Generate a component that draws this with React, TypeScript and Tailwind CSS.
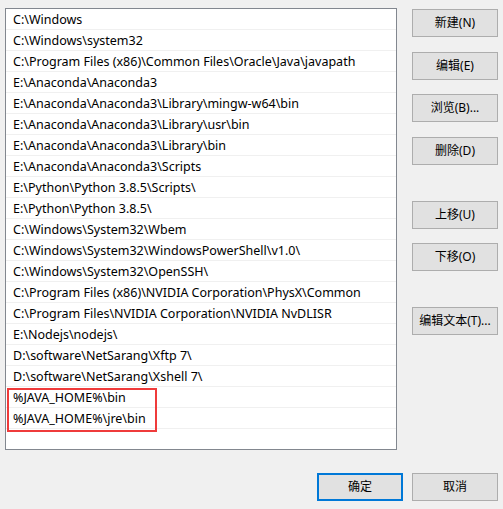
const paths = [
  'C:\\Windows',
  'C:\\Windows\\system32',
  'C:\\Program Files (x86)\\Common Files\\Oracle\\Java\\javapath',
  'E:\\Anaconda\\Anaconda3',
  'E:\\Anaconda\\Anaconda3\\Library\\mingw-w64\\bin',
  'E:\\Anaconda\\Anaconda3\\Library\\usr\\bin',
  'E:\\Anaconda\\Anaconda3\\Library\\bin',
  'E:\\Anaconda\\Anaconda3\\Scripts',
  'E:\\Python\\Python 3.8.5\\Scripts\\',
  'E:\\Python\\Python 3.8.5\\',
  'C:\\Windows\\System32\\Wbem',
  'C:\\Windows\\System32\\WindowsPowerShell\\v1.0\\',
  'C:\\Windows\\System32\\OpenSSH\\',
  'C:\\Program Files (x86)\\NVIDIA Corporation\\PhysX\\Common',
  'C:\\Program Files\\NVIDIA Corporation\\NVIDIA NvDLISR',
  'E:\\Nodejs\\nodejs\\',
  'D:\\software\\NetSarang\\Xftp 7\\',
  'D:\\software\\NetSarang\\Xshell 7\\',
  '%JAVA_HOME%\\bin',
  '%JAVA_HOME%\\jre\\bin',
];

function Btn({ label, className = '', primary = false }: { label: string; className?: string; primary?: boolean }) {
  return (
    <button
      className={
        'w-[86px] h-[28px] bg-[#e1e1e1] text-[12px] text-black flex items-center justify-center ' +
        (primary ? 'border-2 border-[#0078d7] ' : 'border border-[#adadad] ') +
        className
      }
    >
      {label}
    </button>
  );
}

export default function App() {
  return (
    <div
      className="w-[503px] h-[509px] bg-[#f0f0f0] flex flex-col overflow-hidden"
      style={{ fontFamily: '"Noto Sans", "Noto Sans CJK SC", sans-serif' }}
    >
      <div className="flex pl-[5px] pt-[8px]">
        {/* Path list */}
        <div className="relative w-[392px] h-[442px] bg-white border border-[#82878f]">
          {paths.map((p) => (
            <div
              key={p}
              className="h-[21px] border-b border-[#f0f0f0] pl-[7px] pt-[2px] flex items-center text-[12.5px] text-black whitespace-nowrap"
            >
              {p}
            </div>
          ))}
          <div className="absolute left-[1px] top-[379px] w-[150px] h-[44px] border-2 border-[#ef3b3b]" />
        </div>

        {/* Side buttons */}
        <div className="flex flex-col ml-[15px]">
          <Btn label="新建(N)" className="mt-[1px]" />
          <Btn label="编辑(E)" className="mt-[15px]" />
          <Btn label="浏览(B)..." className="mt-[14px]" />
          <Btn label="删除(D)" className="mt-[15px]" />
          <Btn label="上移(U)" className="mt-[36px]" />
          <Btn label="下移(O)" className="mt-[14px]" />
          <Btn label="编辑文本(T)..." className="mt-[36px]" />
        </div>
      </div>

      {/* Dialog buttons */}
      <div className="flex justify-end gap-[9px] pr-[5px] mt-[23px]">
        <Btn label="确定" primary />
        <Btn label="取消" />
      </div>
    </div>
  );
}
